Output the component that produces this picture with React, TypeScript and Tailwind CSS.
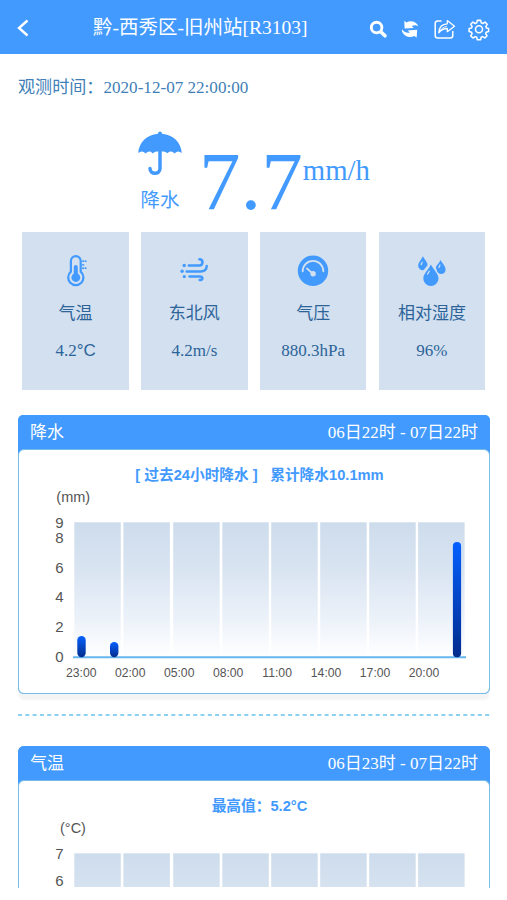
import type { ReactNode } from "react";

const SERIF = "font-['Liberation_Serif','Noto_Sans_CJK_SC',serif]";
const SANS = "font-['Liberation_Sans','Noto_Sans_CJK_SC',sans-serif]";

const columns = [74.3, 123.4, 173.2, 222.3, 271.2, 320.2, 369.2, 418.1];
const hours = ["23:00", "02:00", "05:00", "08:00", "11:00", "14:00", "17:00", "20:00"];

function BackIcon() {
  return (
    <svg width="14" height="18" viewBox="0 0 14 18" fill="none" stroke="white" strokeWidth="2.4">
      <path d="M11.500 1.500 3 9l8.500 7.500" />
    </svg>
  );
}

function HeaderIcons() {
  return (
    <svg className="block" width="122" height="24" viewBox="368 17 122 24" fill="none" stroke="white">
      <circle cx="376.600" cy="27.600" r="5.300" strokeWidth="2.900" />
      <path d="m381.300 32.200 3.700 3.600" strokeWidth="3.600" strokeLinecap="round" />
      <g fill="white" stroke="none">
        <path d="M404.300 20.800l2.100 1.700c4.300-2.300 9.700-1.200 12 3.700-2.500-1.300-4.600-1.300-6.700-.1l2.100 1.900-9.200.6Z" />
        <path d="M416.600 37.700l-2.100-1.700c-4.300 2.300-9.900 1.100-12.200-3.900-.4-1-.5-1.900-.3-2.900 1.800 2.600 4.700 4.200 7.800 3.300l-2.200-2 9.600-.7Z" />
      </g>
      <path d="M441 21.100h-3.300c-1.500 0-2.500 1-2.500 2.500v12c0 1.500 1 2.500 2.500 2.500h12.600c1.500 0 2.500-1 2.500-2.500v-4" strokeWidth="1.500" strokeLinecap="round" />
      <path d="M447.300 20.600v3.200c-5.200.2-8.300 3.200-8.500 9 2-2.900 4.600-4.300 8.500-4.300v3.200l7.200-5.500Z" strokeWidth="1.300" strokeLinejoin="round" />
      <path d="M439.300 32.200c1.200-3 3.700-5.200 7.700-5.900" strokeWidth=".8" />
      <g transform="translate(479 29.200) scale(.95)" strokeWidth="1.600" strokeLinejoin="round">
        <path d="M-1.800-9.300h3.600l.6 2.600 1.500.7 2.500-1.500 2.200 2.300-1.400 2.400.6 1.600 2.300.5v3.200l-2.500.6-.6 1.500 1.500 2.300-2.300 2.300-2.400-1.400-1.500.7-.6 2.600h-3.500l-.6-2.600-1.500-.7-2.400 1.500-2.400-2.300 1.400-2.400-.6-1.500-2.500-.6v-3.200l2.500-.6.7-1.500-1.500-2.400 2.300-2.300 2.500 1.500 1.500-.7Z" />
        <circle r="3.700" />
      </g>
    </svg>
  );
}

function UmbrellaIcon() {
  return (
    <svg width="44" height="46" viewBox="0 0 44 46" fill="#429aff">
      <path d="M20 2.700c0-2.800 4-2.800 4 0C35.500 3.800 43 11.500 43.800 22c-2.700-2.200-5.100-2.100-7.200.5-2.400-2.700-4.800-2.700-7.200-.3-1.400-1-2.600-1.500-3.600-1.600h-7.200c-1.300.1-2.600.7-3.900 1.800-2.300-2.500-4.600-2.500-7.100.2-2.200-2.700-4.700-2.800-7.400-.6C1 11.500 8.500 3.800 20 2.700Z" />
      <path d="M22 19v18.500c0 6.300-10 6.300-10 0" fill="none" stroke="#429aff" strokeWidth="3.500" strokeLinecap="round" />
    </svg>
  );
}

function ThermometerIcon() {
  return (
    <svg width="32" height="32" viewBox="0 0 32 32" fill="none" stroke="#429aff" strokeLinecap="round">
      <path d="M10.900 16.700V6a4.900 4.900 0 0 1 9.800 0v10.700a7.600 7.600 0 1 1-9.800 0Z" strokeWidth="2.200" />
      <path d="M15.800 12v9" strokeWidth="4" />
      <circle cx="15.800" cy="22.500" r="4.400" fill="#429aff" stroke="none" />
      <path d="M22.900 6.200h.5m2 0h.4m-2.900 3.600h.5m-.5 3.400h.5m2 0h.4" strokeWidth="1.700" />
    </svg>
  );
}

function WindIcon() {
  return (
    <svg width="32" height="32" viewBox="0 0 32 32" fill="none" stroke="#429aff" strokeWidth="2.500" strokeLinecap="round">
      <path d="M10.800 10.500h10.400c4.200 0 4.500-6 .2-6.200" />
      <path d="M8.600 16.500h13.800c4.200 0 6.200-2.100 6.300-5.500" />
      <path d="M11.500 21.400h10.300c3.500 0 3.300 4.100-.1 3.500" />
      <g fill="#429aff" stroke="none">
        <circle cx="6.200" cy="10.500" r="1.700" />
        <circle cx="4.100" cy="16.300" r="1.700" />
        <circle cx="6.300" cy="21.600" r="1.600" />
      </g>
    </svg>
  );
}

function GaugeIcon() {
  return (
    <svg width="32" height="32" viewBox="0 0 32 32" fill="none" stroke="#d3e0ef">
      <circle cx="16" cy="15.800" r="15.200" fill="#429aff" stroke="none" />
      <path d="M5.700 16.200a10.300 10.300 0 0 1 20.600 0" strokeWidth="1.900" strokeLinecap="round" />
      <circle cx="16.100" cy="18.800" r="2.700" fill="#d3e0ef" stroke="none" />
      <path d="m16 18.800-6-5.300" strokeWidth="1.700" strokeLinecap="round" />
    </svg>
  );
}

function DropsIcon() {
  return (
    <svg width="32" height="32" viewBox="0 0 32 32" fill="#429aff">
      <path d="M14.900 9.400c2.800 5.200 7.600 9.400 7.600 14a7.600 7.600 0 0 1-15.200 0c0-4.600 5-8.900 7.600-14Z" />
      <path d="M6.900 1.200c1.800 3.500 4.700 6 4.700 9.100-2 1.900-2.700 4-4.200 4.800a4.700 4.700 0 0 1-5.200-4.700c0-3 3.100-5.600 4.700-9.200Z" />
      <path d="M24.500 4.900c1.800 3.500 5.100 6 5.100 9.500 0 6-8.200 6-8.900.7-.4-1.400-.8-2.200-.8-3.100 1.200-2.500 3.400-4.200 4.600-7.100Z" />
      <g stroke="#d3e0ef" strokeWidth="1.200" strokeLinecap="round">
        <path d="M13.200 16.200c-.2 1-1.200 1.800-1.600 3M6.200 7.200 5.100 9.700M24 10l-1 2.500" />
      </g>
    </svg>
  );
}

function Metric({ icon, label, value }: { icon: ReactNode; label: string; value: ReactNode }) {
  return (
    <div className="flex h-[158px] w-[106.500px] flex-col items-center bg-[#d3e0ef] pt-[23px] text-[17px] text-[#2c6499]">
      {icon}
      <div className="mt-[14px] leading-[26px] whitespace-nowrap">{label}</div>
      <div className="mt-[11px] leading-[25px] whitespace-nowrap">{value}</div>
    </div>
  );
}

function Columns() {
  return (
    <>
      <defs>
        <linearGradient id="column" x1="0" y1="522" x2="0" y2="657" gradientUnits="userSpaceOnUse">
          <stop offset="0" stopColor="#cddcec" />
          <stop offset="0.35" stopColor="#d9e4f1" />
          <stop offset="0.7" stopColor="#ebf1f9" />
          <stop offset="1" stopColor="#ffffff" />
        </linearGradient>
        <linearGradient id="bar" x1="0" y1="0" x2="0" y2="1">
          <stop offset="0" stopColor="#0560ff" />
          <stop offset="1" stopColor="#022c8c" />
        </linearGradient>
      </defs>
      {columns.map((x) => (
        <rect key={x} x={x} y="522.300" width="46.500" height="134.500" fill="url(#column)" />
      ))}
    </>
  );
}

function RainChart() {
  const ticks: [string, number][] = [["9", 522.5], ["8", 537.5], ["6", 567.5], ["4", 597], ["2", 627], ["0", 657]];
  return (
    <svg className={`block ${SANS}`} width="470" height="203" viewBox="19 490 470 203" fill="#555555">
      <text x="56.300" y="501.500" fontSize="14.500">(mm)</text>
      <Columns />
      {ticks.map(([t, y]) => (
        <text key={t} x="63.500" y={y + 5.300} fontSize="15" textAnchor="end">{t}</text>
      ))}
      <path d="M73 657.300h393" stroke="#66b5ed" strokeWidth="2" />
      <rect x="77.300" y="636" width="8.400" height="21.300" rx="4.200" fill="url(#bar)" />
      <rect x="110" y="642" width="8.400" height="15.300" rx="4.200" fill="url(#bar)" />
      <rect x="452.900" y="542" width="8.200" height="115.300" rx="4.100" fill="url(#bar)" />
      {hours.map((h, i) => (
        <text key={h} x={81.200 + i * 48.980} y="677" fontSize="12.200" textAnchor="middle">{h}</text>
      ))}
    </svg>
  );
}

function TemperatureChart() {
  return (
    <svg className={`block shrink-0 ${SANS}`} width="470" height="66" viewBox="19 490 470 66" fill="#555555">
      <text x="60" y="501.500" fontSize="14.500">(°C)</text>
      <Columns />
      <text x="63.500" y="527.800" fontSize="15" textAnchor="end">7</text>
      <text x="63.500" y="554.500" fontSize="15" textAnchor="end">6</text>
    </svg>
  );
}

function PanelHeader({ title, range }: { title: string; range: string }) {
  return (
    <div className="flex h-[34px] shrink-0 items-center justify-between rounded-t-[5px] bg-[#429aff] px-[12px] pt-[2px] text-[17px] text-white">
      <span>{title}</span>
      <span>{range}</span>
    </div>
  );
}

export default function App() {
  return (
    <main className={`flex h-[900px] w-[507px] flex-col overflow-hidden bg-white ${SERIF}`}>
      <header className="flex h-[54px] shrink-0 items-center justify-between bg-[#429aff] pr-[17px] pl-[16px] text-white">
        <div className="flex items-center pt-[2px]">
          <BackIcon />
          <h1 className="ml-[63px] text-[19.500px] whitespace-nowrap">黔-西秀区-旧州站[R3103]</h1>
        </div>
        <div className="pt-[4px]"><HeaderIcons /></div>
      </header>

      <div className="mt-[21px] ml-[18px] h-[26px] text-[17.100px] leading-[26px] text-[#417fb8]">观测时间：2020-12-07 22:00:00</div>

      <section className="mt-[29px] flex h-[102px] shrink-0 pl-[138px] text-[#429aff]">
        <div className="flex w-[44px] flex-col items-center pt-px">
          <UmbrellaIcon />
          <span className="mt-[10px] text-[19.500px] leading-[28px] whitespace-nowrap">降水</span>
        </div>
        <div className="ml-[17px] pt-[4px] text-[83px] leading-[94px]">7.7</div>
        <div className="pt-[22px] text-[28.800px] leading-[36px]">mm/h</div>
      </section>

      <section className="flex shrink-0 gap-[12.300px] pl-[22.300px]">
        <Metric icon={<ThermometerIcon />} label="气温" value={<>4.2<span className={SANS}>°C</span></>} />
        <Metric icon={<WindIcon />} label="东北风" value="4.2m/s" />
        <Metric icon={<GaugeIcon />} label="气压" value="880.3hPa" />
        <Metric icon={<DropsIcon />} label="相对湿度" value="96%" />
      </section>

      <section className="mx-[18px] mt-[25px] h-[279px] w-[472px] shrink-0 rounded-[6px] bg-[#429aff] shadow-[0_7px_2px_-1px_#f4f4f4]">
        <PanelHeader title="降水" range="06日22时 - 07日22时" />
        <div className="h-[245px] rounded-[6px] border border-[#75bde6] bg-white">
          <div className={`flex h-[40px] items-center justify-center gap-[12.500px] pt-[10px] pl-[11px] text-[14.700px] font-bold text-[#429aff] ${SANS}`}>
            <span className="whitespace-nowrap">[ 过去24小时降水 ]</span>
            <span className="whitespace-nowrap">累计降水10.1mm</span>
          </div>
          <RainChart />
        </div>
      </section>

      <svg className="mt-[20px] ml-[18px] shrink-0" width="472" height="2" viewBox="0 0 472 2">
        <path d="M0 1h472" stroke="#66c2ed" strokeWidth="1.700" strokeDasharray="4 3.300" />
      </svg>

      <section className="mx-[18px] mt-[30px] flex h-[142px] w-[472px] shrink-0 flex-col overflow-hidden rounded-t-[6px] bg-[#429aff]">
        <PanelHeader title="气温" range="06日23时 - 07日22时" />
        <div className="h-[108px] rounded-t-[6px] border border-b-0 border-[#75bde6] bg-white">
          <div className={`flex h-[40px] items-center justify-center pt-[10px] pl-[11px] text-[14.700px] font-bold text-[#429aff] ${SANS}`}>最高值：5.2°C</div>
          <TemperatureChart />
        </div>
      </section>
    </main>
  );
}
